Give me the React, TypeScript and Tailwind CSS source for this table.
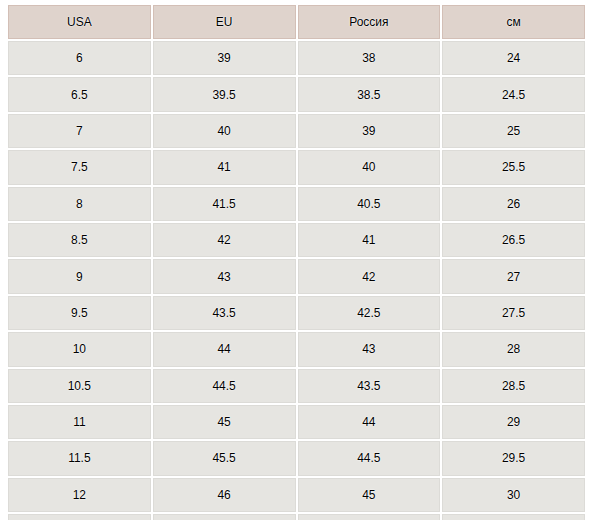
const rows: [string, string, string, string][] = [
  ["6", "39", "38", "24"],
  ["6.5", "39.5", "38.5", "24.5"],
  ["7", "40", "39", "25"],
  ["7.5", "41", "40", "25.5"],
  ["8", "41.5", "40.5", "26"],
  ["8.5", "42", "41", "26.5"],
  ["9", "43", "42", "27"],
  ["9.5", "43.5", "42.5", "27.5"],
  ["10", "44", "43", "28"],
  ["10.5", "44.5", "43.5", "28.5"],
  ["11", "45", "44", "29"],
  ["11.5", "45.5", "44.5", "29.5"],
  ["12", "46", "45", "30"],
  // the next row only peeks in at the bottom edge, no text visible
  ["", "", "", ""],
];

const head = ["USA", "EU", "Россия", "см"];

export default function App() {
  return (
    <div className="w-[591px] h-[520px] overflow-hidden bg-white pl-[8px] pt-[5px] font-['Liberation_Sans',Arial,sans-serif] text-[12px] text-black">
      <div className="grid w-[577px] grid-cols-4 gap-[2px]">
        {/* header */}
        {head.map((h) => (
          <div
            key={h}
            className="flex h-[34px] items-center justify-center border border-[#d3bfb6] bg-[#dfd3cc] [text-shadow:0_0_2px_#fff,0_0_1px_#fff]"
          >
            {h}
          </div>
        ))}
        {/* body */}
        {rows.map((r, i) =>
          r.map((c, j) => (
            <div
              key={i + "-" + j}
              className="flex h-[34.4px] items-center justify-center border border-[#dcdbd7] bg-[#e6e5e1] [text-shadow:0_0_2px_#fff,0_0_1px_#fff]"
            >
              {c}
            </div>
          ))
        )}
      </div>
    </div>
  );
}
